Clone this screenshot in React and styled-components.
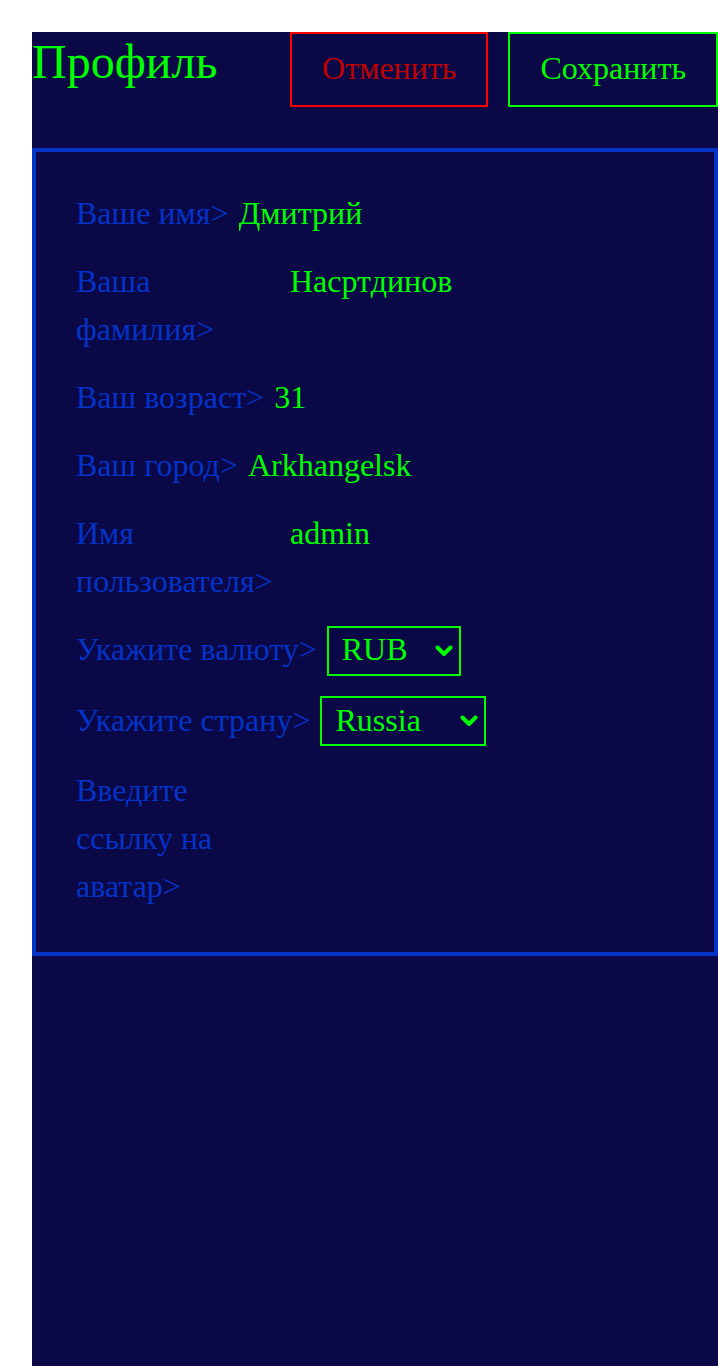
import React from "react";
import styled, { createGlobalStyle } from "styled-components";

const Global = createGlobalStyle`
  html, body { margin: 0; padding: 0; background: #ffffff; }
  body { font-family: "Liberation Serif", "Times New Roman", serif; }
  * { box-sizing: border-box; }
`;

const Shell = styled.div`
  padding: 32px 0 0 32px;
  min-height: 100vh;
  display: flex;
`;

const Page = styled.main`
  flex: 1;
  background: #0a0847;
  display: flex;
  flex-direction: column;
`;

const Header = styled.header`
  display: flex;
  align-items: flex-start;
  margin-bottom: 41px;
`;

const Title = styled.h1`
  margin: 0;
  font-weight: 400;
  font-size: 48px;
  line-height: 60px;
  color: #00ff00;
  flex: 1;
`;

const Button = styled.button`
  font-family: "Liberation Serif", "Times New Roman", serif;
  font-size: 32px;
  line-height: 48px;
  height: 75px;
  padding: 0 30px 4px;
  background: transparent;
  border: 2px solid ${(p) => (p.$variant === "cancel" ? "#ff0000" : "#00ff00")};
  color: ${(p) => (p.$variant === "cancel" ? "#c00000" : "#00ff00")};
  margin-left: ${(p) => (p.$variant === "cancel" ? "0" : "20px")};
  cursor: pointer;
`;

const Card = styled.section`
  border: 4px solid #0433c8;
  padding: 37px 40px 42px;
  display: flex;
  flex-direction: column;
  gap: 20px;
`;

const Row = styled.label`
  display: flex;
  align-items: ${(p) => (p.$select ? "baseline" : "flex-start")};
  gap: 10px;
`;

const Caption = styled.span`
  font-size: 32px;
  line-height: 48px;
  color: #0433c8;
`;

const TextInput = styled.input`
  flex-shrink: 0;
  width: 384px;
  height: 48px;
  padding: 0;
  border: none;
  outline: none;
  background: transparent;
  font-family: "Liberation Serif", "Times New Roman", serif;
  font-size: 32px;
  line-height: 48px;
  color: #00ff00;
`;

const SelectBox = styled.span`
  position: relative;
  display: inline-flex;
  flex-shrink: 0;
`;

const Select = styled.select`
  appearance: none;
  -webkit-appearance: none;
  width: ${(p) => p.$width}px;
  height: 50px;
  margin: 0;
  padding: 0 34px 3px 13px;
  border: 2px solid #00ff00;
  border-radius: 0;
  background: transparent;
  font-family: "Liberation Serif", "Times New Roman", serif;
  font-size: 32px;
  color: #00ff00;
  outline: none;
  cursor: pointer;
`;

const Chevron = styled.svg`
  position: absolute;
  right: 8px;
  top: 50%;
  transform: translateY(-50%);
  pointer-events: none;
`;

const Option = styled.option`
  background: #0a0847;
  color: #00ff00;
`;

const fields = [
  { label: "Ваше имя>", value: "Дмитрий" },
  { label: "Ваша фамилия>", value: "Насртдинов" },
  { label: "Ваш возраст>", value: "31" },
  { label: "Ваш город>", value: "Arkhangelsk" },
  { label: "Имя пользователя>", value: "admin" },
];

function Dropdown({ width, value, options }) {
  return (
    <SelectBox>
      <Select $width={width} defaultValue={value}>
        {options.map((o) => (
          <Option key={o} value={o}>
            {o}
          </Option>
        ))}
      </Select>
      <Chevron width="18" height="12" viewBox="0 0 18 12">
        <path d="M2.5 2.5 L9 9 L15.5 2.5" fill="none" stroke="#00ff00" strokeWidth="4" strokeLinecap="round" strokeLinejoin="round" />
      </Chevron>
    </SelectBox>
  );
}

export default function App() {
  return (
    <>
      <Global />
      <Shell>
        <Page>
          <Header>
            <Title>Профиль</Title>
            <Button $variant="cancel">Отменить</Button>
            <Button $variant="save">Сохранить</Button>
          </Header>
          <Card>
            {fields.map((f) => (
              <Row key={f.label}>
                <Caption>{f.label}</Caption>
                <TextInput defaultValue={f.value} />
              </Row>
            ))}
            <Row $select>
              <Caption>Укажите валюту&gt;</Caption>
              <Dropdown width={134} value="RUB" options={["RUB", "EUR", "USD"]} />
            </Row>
            <Row $select>
              <Caption>Укажите страну&gt;</Caption>
              <Dropdown width={166} value="Russia" options={["Russia", "Belarus", "Ukraine"]} />
            </Row>
            <Row>
              <Caption>Введите ссылку на аватар&gt;</Caption>
              <TextInput defaultValue="" />
            </Row>
          </Card>
        </Page>
      </Shell>
    </>
  );
}
